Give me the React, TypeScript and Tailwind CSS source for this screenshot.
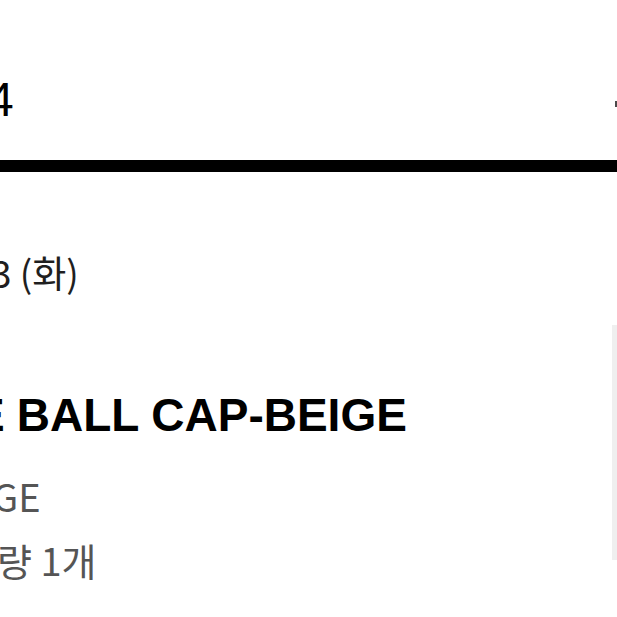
import React from "react";

const kr = { fontFamily: '"Noto Sans CJK KR", "Noto Sans", sans-serif' };
const lat = { fontFamily: '"Liberation Sans", Arial, sans-serif' };

export default function App() {
  return (
    <div className="w-[617px] h-[617px] overflow-hidden bg-white">
      {/* header */}
      <div className="h-[160px] pt-[76px] flex justify-between items-start">
        <div style={lat} className="text-[48px] leading-[48px] text-black whitespace-nowrap ml-[-13px]">
          4
        </div>
        <div className="mt-[25px] w-[2px] h-[6px] bg-[#4a4a4a]" />
      </div>
      <div className="h-[12px] bg-black" />

      {/* date */}
      <div className="pt-[81px]">
        <div style={kr} className="text-[37px] leading-[38px] text-[#1f1f1f] whitespace-nowrap ml-[-9px]">
          3 (화)
        </div>
      </div>

      {/* product row */}
      <div className="mt-[34px] flex">
        <div className="w-[612px] shrink-0 pt-[67px]">
          <div style={lat} className="text-[46px] leading-[46px] font-bold text-black whitespace-nowrap">
            <span className="ml-[-26px]">E</span>
            <span className="ml-[12px]">BALL CAP-BEIGE</span>
          </div>
          <div style={kr} className="mt-[39px] text-[38px] leading-[38px] text-[#555555] whitespace-nowrap ml-[-8px]">
            GE
          </div>
          <div style={kr} className="mt-[26px] text-[38px] leading-[38px] text-[#555555] whitespace-nowrap ml-[-3px]">
            량 1개
          </div>
        </div>
        <div className="w-[235px] h-[235px] shrink-0 bg-[#efefef]" />
      </div>
    </div>
  );
}
